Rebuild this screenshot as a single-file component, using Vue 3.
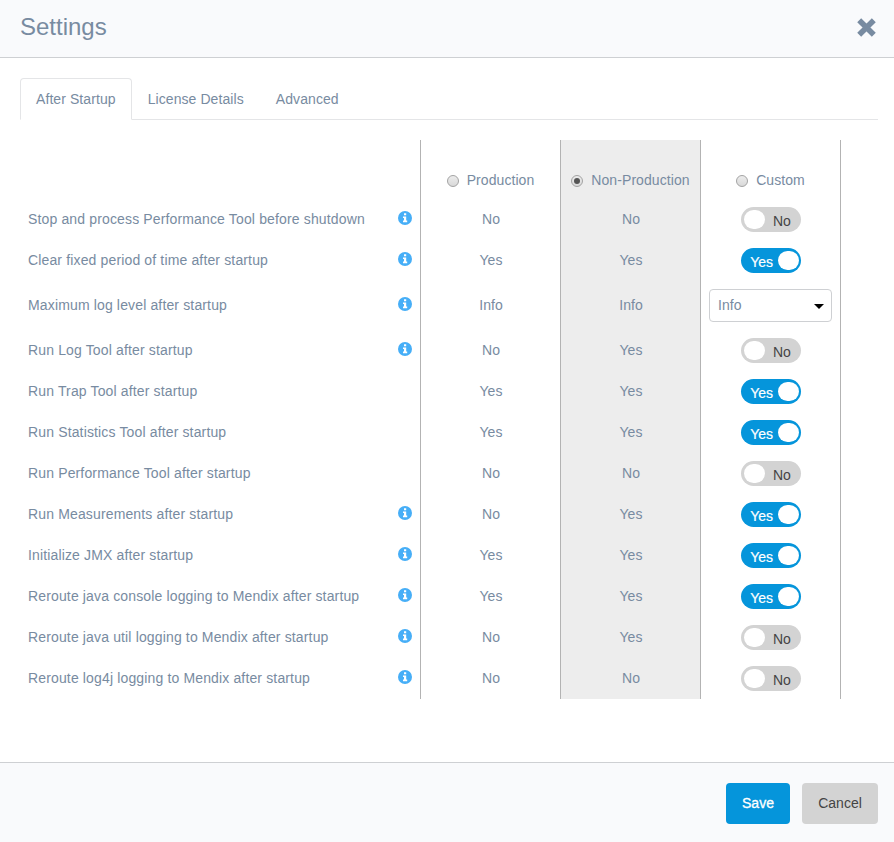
<script setup>
import { ref } from 'vue'

const tabs = ['After Startup', 'License Details', 'Advanced']
const activeTab = ref(0)
const modes = ['Production', 'Non-Production', 'Custom']
const mode = ref('Non-Production')

const rows = ref([
  { label: 'Stop and process Performance Tool before shutdown', info: true, prod: 'No', non: 'No', custom: false },
  { label: 'Clear fixed period of time after startup', info: true, prod: 'Yes', non: 'Yes', custom: true },
  { label: 'Maximum log level after startup', info: true, prod: 'Info', non: 'Info', select: 'Info' },
  { label: 'Run Log Tool after startup', info: true, prod: 'No', non: 'Yes', custom: false },
  { label: 'Run Trap Tool after startup', info: false, prod: 'Yes', non: 'Yes', custom: true },
  { label: 'Run Statistics Tool after startup', info: false, prod: 'Yes', non: 'Yes', custom: true },
  { label: 'Run Performance Tool after startup', info: false, prod: 'No', non: 'No', custom: false },
  { label: 'Run Measurements after startup', info: true, prod: 'No', non: 'Yes', custom: true },
  { label: 'Initialize JMX after startup', info: true, prod: 'Yes', non: 'Yes', custom: true },
  { label: 'Reroute java console logging to Mendix after startup', info: true, prod: 'Yes', non: 'Yes', custom: true },
  { label: 'Reroute java util logging to Mendix after startup', info: true, prod: 'No', non: 'Yes', custom: false },
  { label: 'Reroute log4j logging to Mendix after startup', info: true, prod: 'No', non: 'No', custom: false },
])
</script>

<template>
  <div class="dialog">
    <header class="head">
      <h4 class="title">Settings</h4>
      <button class="close" aria-label="Close">
        <svg width="20" height="20" viewBox="0 0 20 20">
          <path d="M3.2 2.3 17.8 16.7M17.8 2.3 3.2 16.7" stroke="#788ba1" stroke-width="5.6" />
        </svg>
      </button>
    </header>

    <main class="body">
      <ul class="tabs">
        <li v-for="(t, i) in tabs" :key="t" class="tab" :class="{ active: i === activeTab }" @click="activeTab = i">{{ t }}</li>
      </ul>

      <div class="table">
        <div class="row heading">
          <div class="name"></div>
          <label v-for="m in modes" :key="m" class="cell mode" :class="{ shaded: m === 'Non-Production' }" @click="mode = m">
            <span class="radio" :class="{ checked: m === mode }"></span>
            <span>{{ m }}</span>
          </label>
        </div>
        <div v-for="r in rows" :key="r.label" class="row" :class="{ tall: r.select }">
          <div class="name">
            <span>{{ r.label }}</span>
            <svg v-if="r.info" class="info" width="14" height="14" viewBox="0 0 14 14">
              <circle cx="7" cy="7" r="7" fill="#46aef7" />
              <path d="M6 2.2h2.2v2H6zM5 5.4h3.2v4.2h1v1.6H5V9.6h1V7H5z" fill="#fff" />
            </svg>
          </div>
          <div class="cell value">{{ r.prod }}</div>
          <div class="cell value shaded">{{ r.non }}</div>
          <div class="cell last">
            <div v-if="r.select" class="select">
              <span>{{ r.select }}</span>
              <svg width="10" height="5" viewBox="0 0 10 5"><path d="M0 0h10L5 5z" fill="#000" /></svg>
            </div>
            <button v-else class="toggle" :class="{ on: r.custom }" @click="r.custom = !r.custom">
              <span class="knob"></span>
              <span class="state">{{ r.custom ? 'Yes' : 'No' }}</span>
            </button>
          </div>
        </div>
      </div>
    </main>

    <footer class="foot">
      <button class="btn primary">Save</button>
      <button class="btn">Cancel</button>
    </footer>
  </div>
</template>

<style>
body {
  margin: 0;
  background: #fff;
}
</style>

<style scoped>
* {
  box-sizing: border-box;
}
button {
  border: 0;
  padding: 0;
  font: inherit;
  cursor: pointer;
}
.dialog {
  display: flex;
  flex-direction: column;
  height: 842px;
  font: 14px/20px "Liberation Sans", Arial, sans-serif;
  letter-spacing: 0.08px;
  color: #788ba1;
}
.head {
  display: flex;
  justify-content: space-between;
  height: 58px;
  padding: 12px 18px 0 20px;
  background: #f9fafc;
  border-bottom: 1px solid #ced0d3;
}
.title {
  margin: 0;
  font-size: 24px;
  line-height: 30px;
  font-weight: 400;
  letter-spacing: 0;
}
.close {
  width: 20px;
  height: 20px;
  margin-top: 6px;
  background: none;
}
.close svg {
  display: block;
  overflow: visible;
}
.body {
  flex: 1;
  padding: 20px 16px 0 20px;
}
.tabs {
  display: flex;
  height: 42px;
  margin: 0;
  padding: 0;
  list-style: none;
  border-bottom: 1px solid #e4e5e7;
}
.tab {
  height: 42px;
  padding: 10px 15px;
  border: 1px solid transparent;
  border-radius: 4px 4px 0 0;
  white-space: nowrap;
}
.tab.active {
  background: #fff;
  border-color: #e4e5e7;
  border-bottom-color: #fff;
}
.table {
  width: 821px;
  margin-top: 20px;
}
.row {
  display: grid;
  grid-template-columns: 400px 140px 140px 141px;
  height: 41px;
}
.row.tall {
  height: 49px;
}
.row.heading {
  height: 59px;
}
.name {
  display: flex;
  align-items: center;
  justify-content: space-between;
  padding: 0 8px 1px;
  letter-spacing: 0.145px;
}
.info {
  margin-bottom: 2px;
}
.cell {
  display: flex;
  align-items: center;
  justify-content: center;
  padding-bottom: 1px;
  border-left: 1px solid #b3b3b3;
}
.cell.value {
  padding-left: 1px;
}
.cell:last-child {
  border-right: 1px solid #b3b3b3;
}
.cell.last {
  padding: 0 8px;
}
.cell.shaded {
  background: #ededed;
}
.cell.mode {
  align-items: flex-start;
  gap: 8px;
  padding-top: 30px;
  white-space: nowrap;
}
.radio {
  position: relative;
  width: 12px;
  height: 12px;
  margin-top: 5px;
  border: 1px solid #a3a3a3;
  border-radius: 50%;
  background: linear-gradient(#ececec, #d9d9d9);
}
.radio.checked::after {
  content: "";
  position: absolute;
  inset: 2px;
  border-radius: 50%;
  background: #555;
}
.select {
  display: flex;
  align-items: center;
  justify-content: space-between;
  width: 123px;
  height: 33px;
  padding: 0 8px;
  border: 1px solid #ced0d3;
  border-radius: 4px;
}
.select span {
  margin-bottom: 1px;
}
.select svg {
  margin: 2px -1px 0 0;
}
.toggle {
  display: flex;
  align-items: center;
  gap: 8px;
  width: 60px;
  height: 25px;
  margin-left: 1px;
  padding: 0 3px;
  border-radius: 12.5px;
  background: #d3d3d3;
  color: #444;
}
.toggle.on {
  flex-direction: row-reverse;
  gap: 5px;
  padding: 0 2px;
  background: #0595db;
  color: #fff;
}
.knob {
  width: 21px;
  height: 19px;
  border-radius: 10px;
  background: #fff;
}
.toggle.on .knob {
  margin-left: 0;
}
.state {
  margin-top: 3px;
  line-height: 20px;
}
.toggle.on .state {
  -webkit-text-stroke: 0.2px #fff;
}
.foot {
  display: flex;
  justify-content: flex-end;
  gap: 12px;
  height: 80px;
  padding: 20px 16px 0 0;
  background: #f9fafc;
  border-top: 1px solid #ced0d3;
}
.btn {
  width: 76px;
  height: 41px;
  padding-bottom: 1px;
  border-radius: 4px;
  background: #d3d3d3;
  color: #444;
}
.btn.primary {
  width: 64px;
  background: #0595db;
  color: #fff;
  -webkit-text-stroke: 0.3px #fff;
}
</style>
